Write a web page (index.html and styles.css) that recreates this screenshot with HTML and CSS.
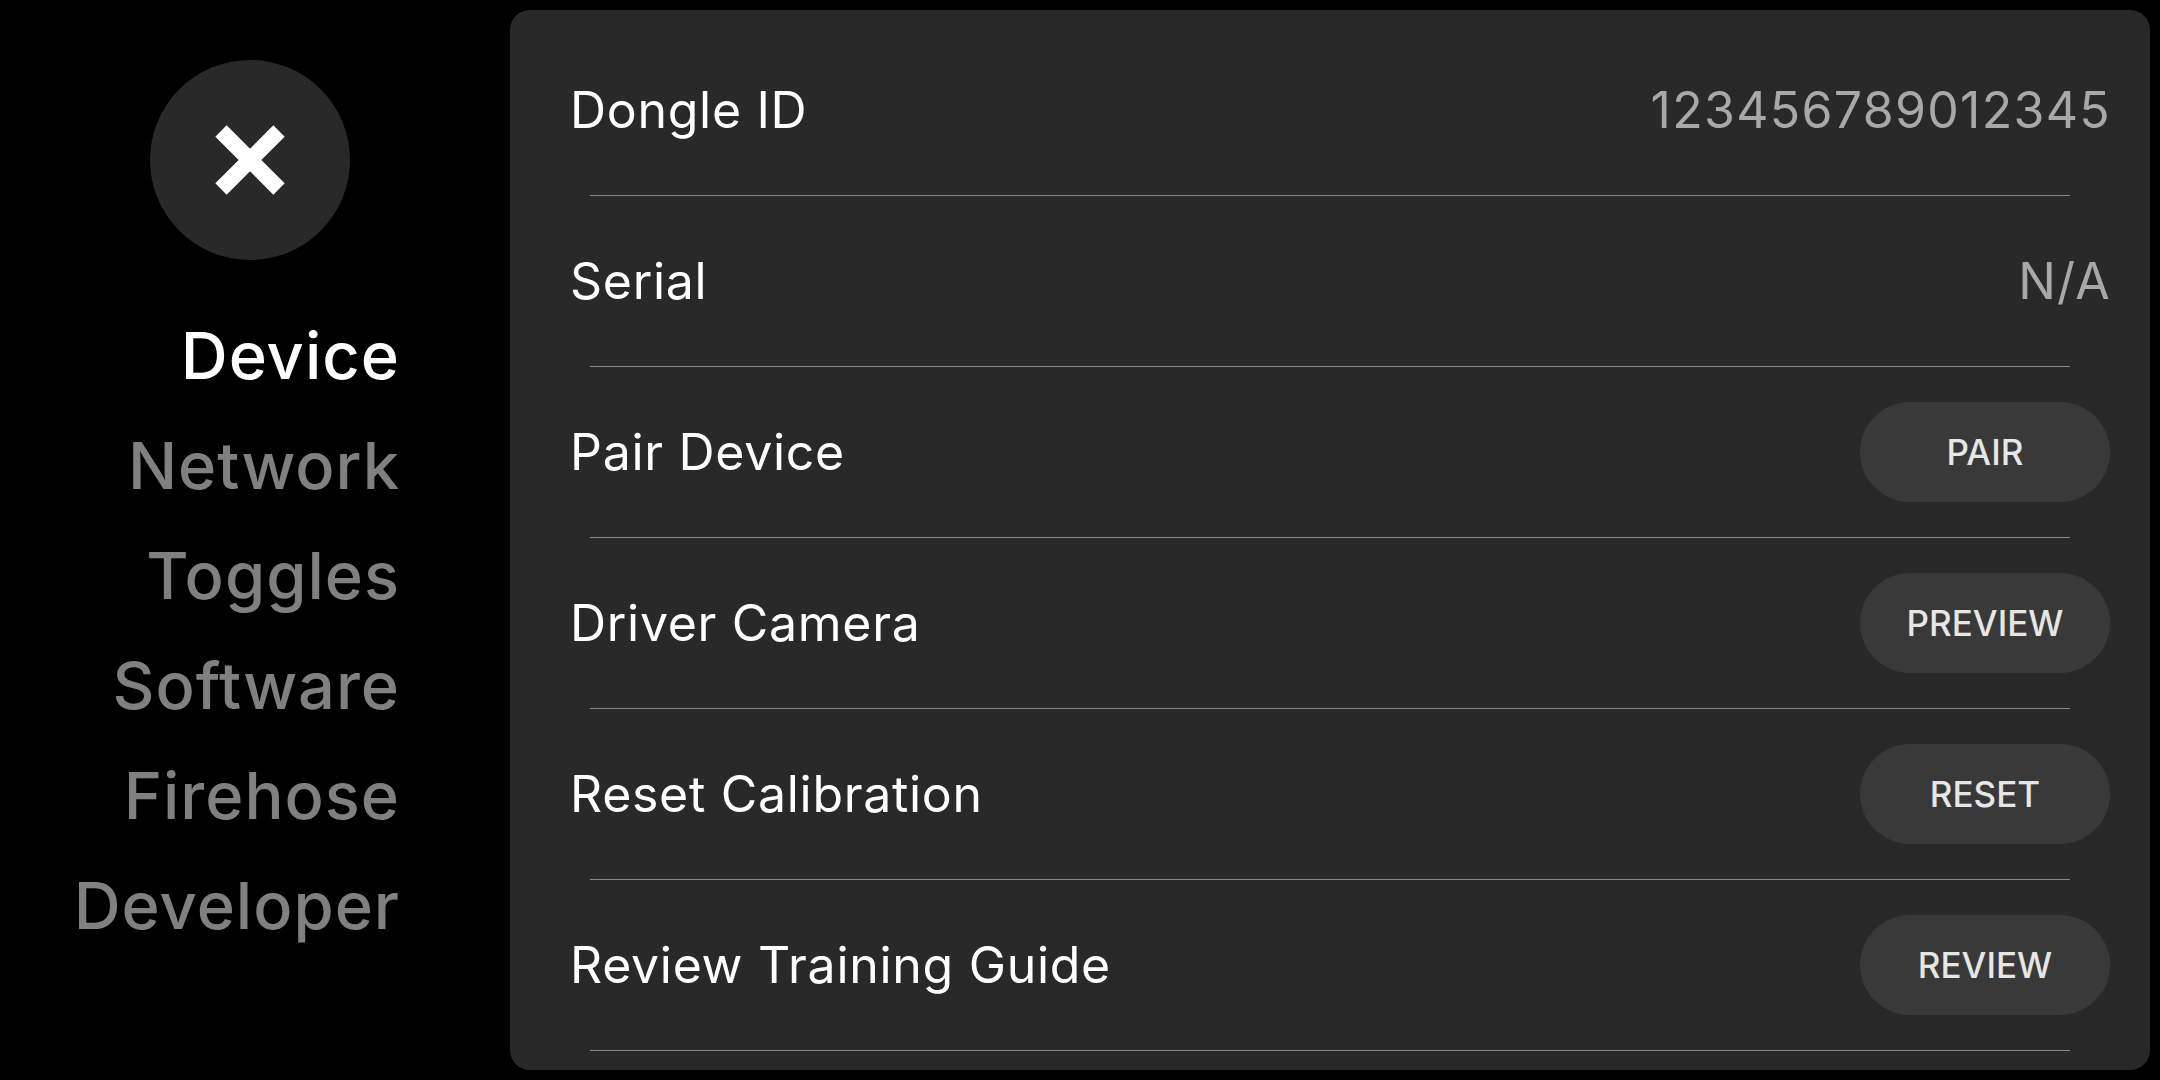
FILE: index.html
```html
<!DOCTYPE html>
<html lang="en">
<head>
<meta charset="utf-8">
<title>Settings - Device</title>
<link rel="stylesheet" href="styles.css">
</head>
<body>
<div class="app">
  <aside class="sidebar">
    <button class="close-btn" aria-label="Close">
      <svg class="close-icon" viewBox="0 0 70 70" width="70" height="70">
        <line x1="6" y1="6" x2="64" y2="64" />
        <line x1="64" y1="6" x2="6" y2="64" />
      </svg>
    </button>
    <nav class="nav">
      <div class="nav-item active">Device</div>
      <div class="nav-item">Network</div>
      <div class="nav-item">Toggles</div>
      <div class="nav-item">Software</div>
      <div class="nav-item">Firehose</div>
      <div class="nav-item">Developer</div>
    </nav>
  </aside>
  <main class="panel">
    <div class="row"><span class="label">Dongle ID</span><span class="value">123456789012345</span></div>
    <div class="sep"></div>
    <div class="row"><span class="label">Serial</span><span class="value">N/A</span></div>
    <div class="sep"></div>
    <div class="row"><span class="label">Pair Device</span><button class="pill">PAIR</button></div>
    <div class="sep"></div>
    <div class="row"><span class="label">Driver Camera</span><button class="pill">PREVIEW</button></div>
    <div class="sep"></div>
    <div class="row"><span class="label">Reset Calibration</span><button class="pill">RESET</button></div>
    <div class="sep"></div>
    <div class="row"><span class="label">Review Training Guide</span><button class="pill">REVIEW</button></div>
    <div class="sep"></div>
  </main>
</div>
</body>
</html>
```

FILE: styles.css
```css
* { box-sizing: border-box; }

html, body {
  margin: 0;
  padding: 0;
  background: #000;
  font-family: Inter, "Noto Sans", "Liberation Sans", sans-serif;
}

.app {
  display: flex;
  width: 2160px;
  height: 1080px;
}

.sidebar {
  width: 510px;
  flex: none;
  display: flex;
  flex-direction: column;
  padding: 60px 110px 0 150px;
}

.close-btn {
  width: 200px;
  height: 200px;
  border-radius: 50%;
  border: none;
  padding: 0;
  background: #292929;
  display: flex;
  align-items: center;
  justify-content: center;
}

.close-icon line {
  stroke: #fff;
  stroke-width: 16;
  stroke-linecap: butt;
}

.nav {
  margin-top: 41px;
  display: flex;
  flex-direction: column;
  align-items: flex-end;
}

.nav-item {
  font-size: 65px;
  font-weight: 500;
  line-height: 110px;
  letter-spacing: 1px;
  color: #808080;
  white-space: nowrap;
}

.nav-item.active {
  color: #fff;
}

.panel {
  flex: 1;
  margin: 10px 10px 10px 0;
  background: #292929;
  border-radius: 20px;
  padding: 15px 40px 0 60px;
  display: flex;
  flex-direction: column;
}

.row {
  height: 170px;
  flex: none;
  display: flex;
  align-items: center;
  justify-content: space-between;
}

.label {
  font-size: 50px;
  font-weight: 400;
  letter-spacing: 0.7px;
  color: #fff;
}

.value {
  font-size: 50px;
  font-weight: 400;
  letter-spacing: 1.3px;
  margin-right: -1px;
  color: #a8a8a8;
}

.sep {
  height: 1px;
  flex: none;
  margin: 0 40px 0 20px;
  background: #858585;
}

.pill {
  width: 250px;
  height: 100px;
  border: none;
  border-radius: 50px;
  background: #393939;
  color: #e6e6e6;
  font-family: Inter, "Noto Sans", "Liberation Sans", sans-serif;
  font-size: 35px;
  font-weight: 500;
  padding: 0;
}
```
